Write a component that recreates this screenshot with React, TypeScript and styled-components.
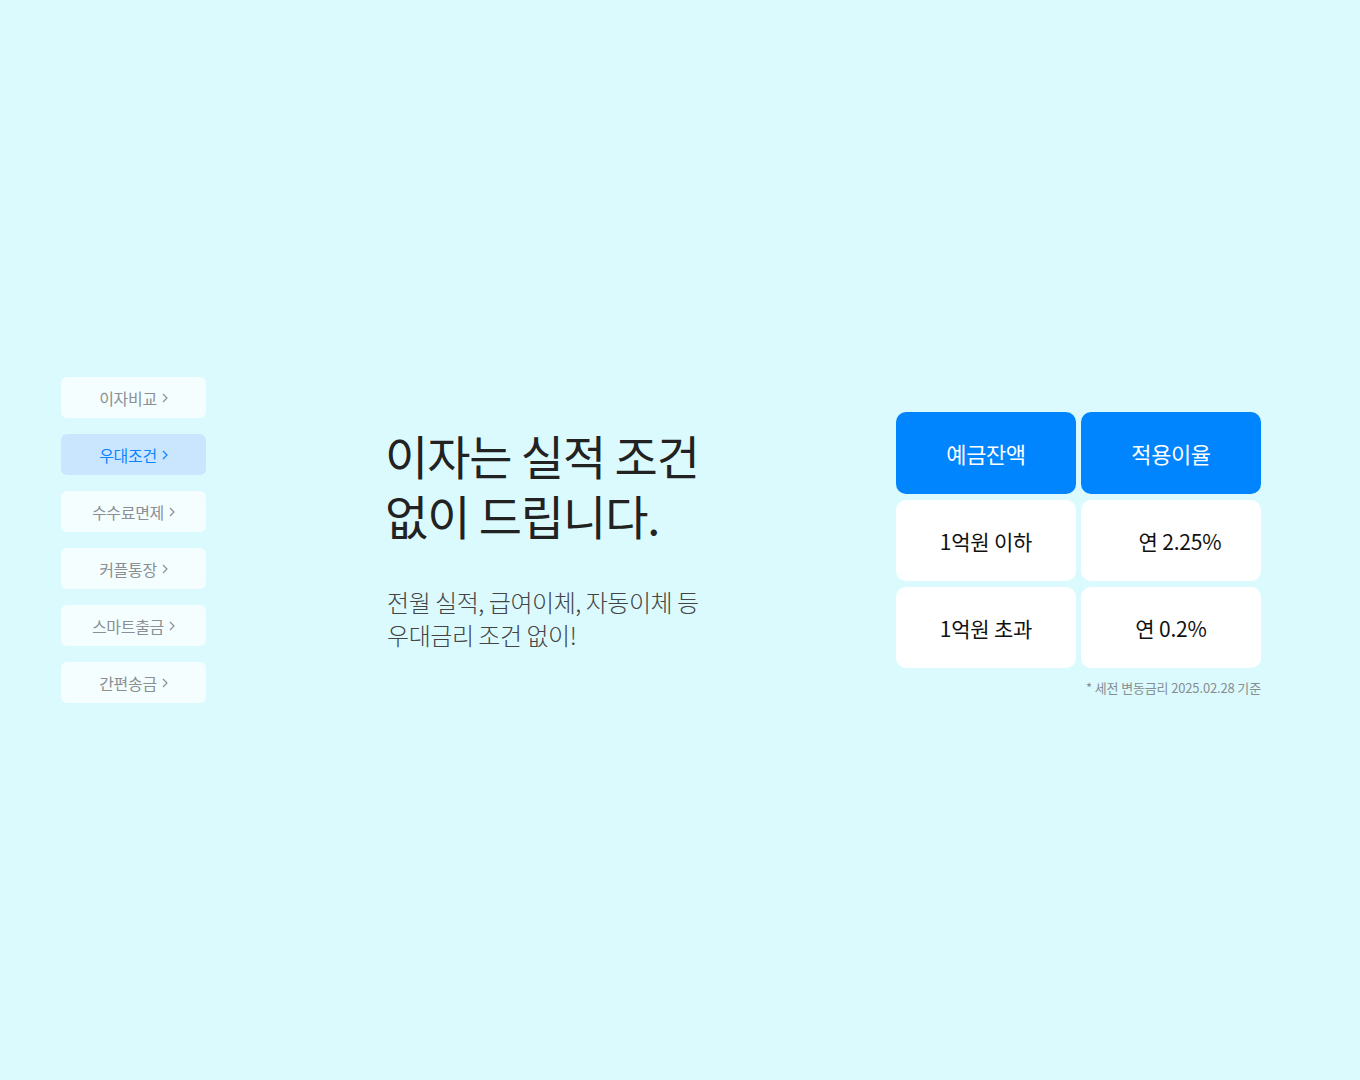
import styled, { createGlobalStyle } from "styled-components";

const GlobalStyle = createGlobalStyle`
  html, body {
    margin: 0;
    padding: 0;
    background: #dbfafe;
  }
  body {
    font-family: "Noto Sans CJK KR", "Noto Sans", sans-serif;
    color: #222;
  }
`;

const Page = styled.div`
  min-height: 100vh;
  display: flex;
  align-items: center;
  padding-left: 61px;
  box-sizing: border-box;
`;

const Nav = styled.nav`
  display: flex;
  flex-direction: column;
  gap: 16px;
  width: 145px;
`;

const NavItem = styled.button<{ $active?: boolean }>`
  height: 41px;
  border: none;
  border-radius: 6px;
  background: ${(p) => (p.$active ? "#cae6ff" : "rgba(255, 255, 255, 0.72)")};
  color: ${(p) => (p.$active ? "#0a84ff" : "#8a8f94")};
  font-family: inherit;
  font-size: 16px;
  letter-spacing: -0.3px;
  display: flex;
  align-items: center;
  justify-content: center;
  gap: 5px;
  cursor: pointer;
  padding: 0;

  svg {
    margin-top: 1px;
  }
`;

const Intro = styled.section`
  margin-left: 179px;
  width: 345px;
  margin-top: -4px;
`;

const Title = styled.h1`
  margin: 0;
  font-size: 47px;
  font-weight: 400;
  line-height: 60px;
  letter-spacing: -1.1px;
  color: #222;
`;

const Desc = styled.p`
  margin: 40px 0 0 2px;
  font-size: 24px;
  font-weight: 300;
  line-height: 33px;
  letter-spacing: -0.45px;
  color: #444;
`;

const RateBox = styled.section`
  margin-left: 166px;
  width: 365px;
  margin-top: 29px;
`;

const Grid = styled.div`
  display: grid;
  grid-template-columns: 180px 180px;
  column-gap: 5px;
  row-gap: 6px;
`;

const Cell = styled.div<{ $head?: boolean; $shift?: number }>`
  height: ${(p) => (p.$head ? 82 : 81)}px;
  border-radius: 10px;
  background: ${(p) => (p.$head ? "#0085ff" : "#ffffff")};
  color: ${(p) => (p.$head ? "#ffffff" : "#111")};
  display: flex;
  align-items: center;
  justify-content: center;
  font-size: ${(p) => (p.$head ? 22 : 21)}px;
  letter-spacing: ${(p) => (p.$head ? -0.4 : -0.2)}px;
  padding-left: ${(p) => p.$shift ?? 0}px;
  box-sizing: border-box;
`;

const Note = styled.p`
  margin: 10px 0 0;
  text-align: right;
  font-size: 13px;
  letter-spacing: -0.15px;
  color: #888d91;
`;

const Chevron = () => (
  <svg width="6" height="10" viewBox="0 0 6 10" fill="none">
    <path d="M1 1l4 4-4 4" stroke="currentColor" strokeWidth="1.2" />
  </svg>
);

const menus = ["이자비교", "우대조건", "수수료면제", "커플통장", "스마트출금", "간편송금"];

const rows = [
  { amount: "1억원 이하", rate: "연 2.25%", shift: 18 },
  { amount: "1억원 초과", rate: "연 0.2%", shift: 0 },
];

const App: React.FC = () => {
  return (
    <>
      <GlobalStyle />
      <Page>
        <Nav>
          {menus.map((m) => (
            <NavItem key={m} $active={m === "우대조건"}>
              {m}
              <Chevron />
            </NavItem>
          ))}
        </Nav>
        <Intro>
          <Title>
            이자는 실적 조건
            <br />
            없이 드립니다.
          </Title>
          <Desc>
            전월 실적, 급여이체, 자동이체 등
            <br />
            우대금리 조건 없이!
          </Desc>
        </Intro>
        <RateBox>
          <Grid>
            <Cell $head>예금잔액</Cell>
            <Cell $head>적용이율</Cell>
            {rows.map((r) => [
              <Cell key={r.amount}>{r.amount}</Cell>,
              <Cell key={r.rate} $shift={r.shift}>
                {r.rate}
              </Cell>,
            ])}
          </Grid>
          <Note>* 세전 변동금리 2025.02.28 기준</Note>
        </RateBox>
      </Page>
    </>
  );
};

export default App;
